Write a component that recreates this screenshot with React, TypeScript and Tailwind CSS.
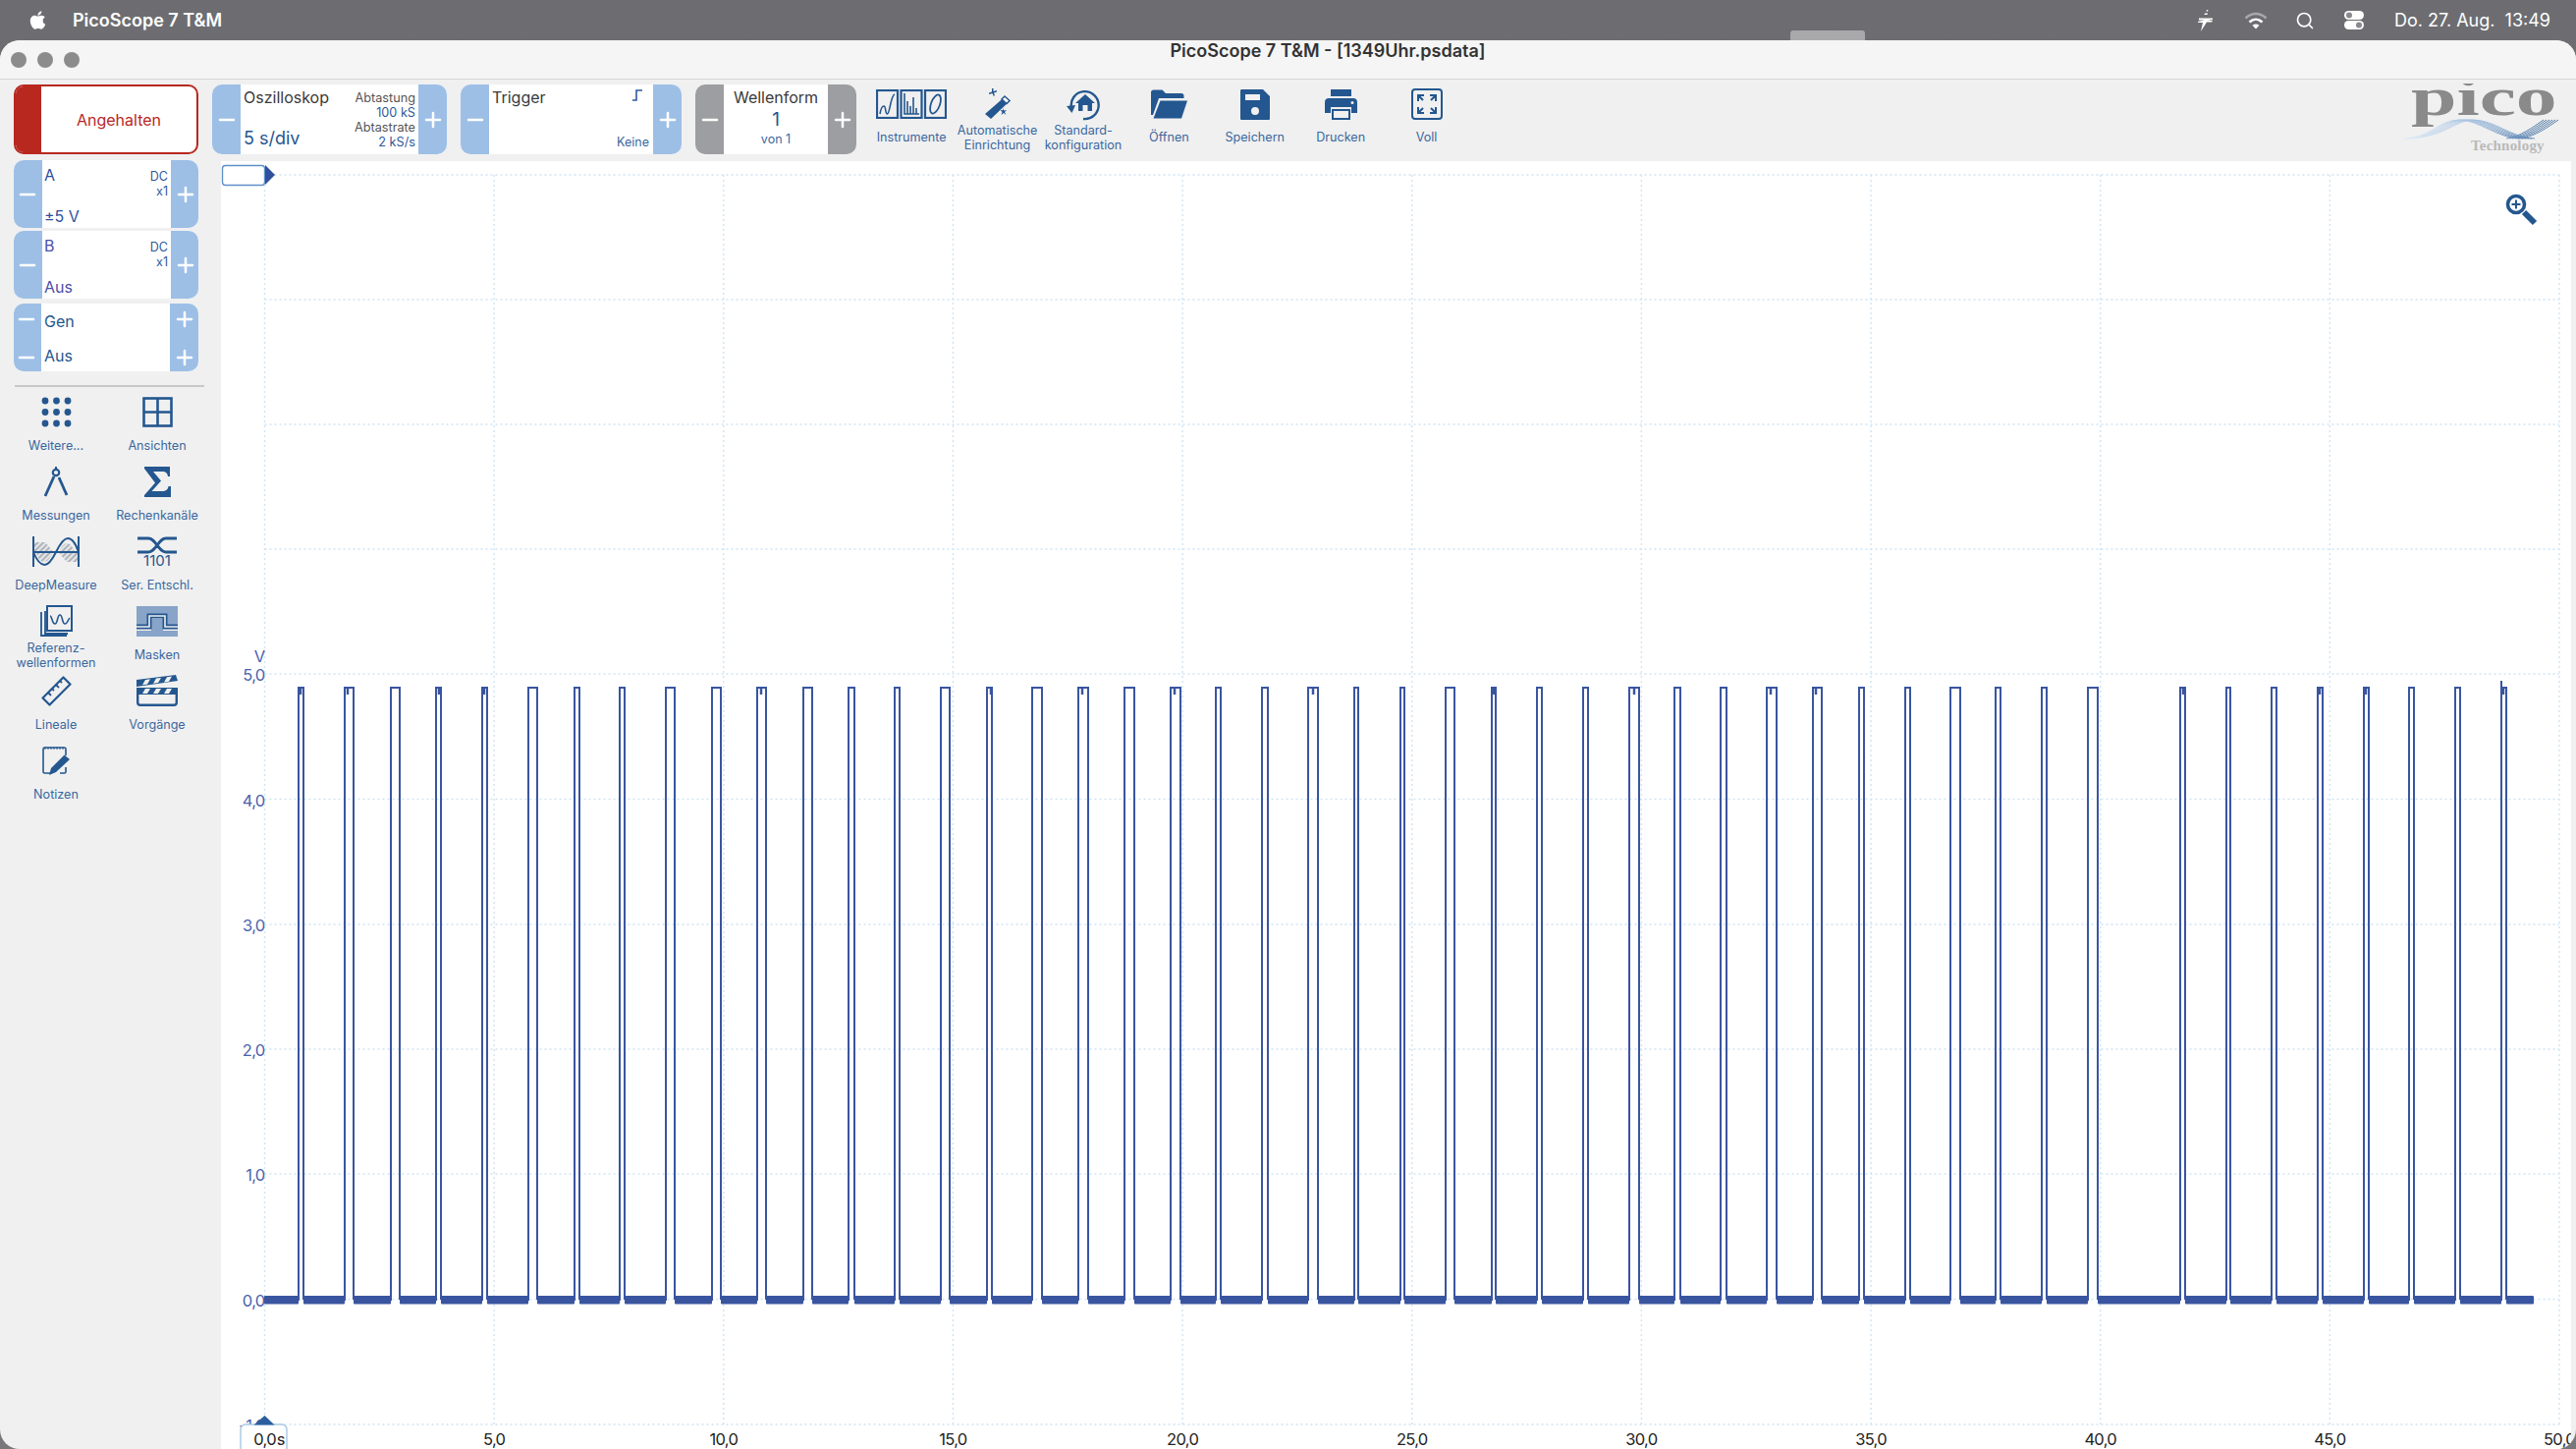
import type { ReactNode } from 'react'
import { FaApple } from 'react-icons/fa'
import { Minus, Plus, Search } from 'lucide-react'

const TRACE = '#3a55a0'
const GRID = '#cfe4f3'

// flat stretches of the trace between pulses, read off the capture
const LOWS: [number, number][] = [
  [269, 304], [309, 351], [360, 398], [407, 444], [449, 491], [496, 538], [547, 585], [590, 631],
  [636, 678], [687, 725], [734, 771], [780, 818], [827, 864], [870, 911], [916, 958], [967, 1005],
  [1010, 1051], [1061, 1098], [1108, 1145], [1155, 1192], [1202, 1238], [1243, 1285], [1291, 1332],
  [1342, 1379], [1383, 1426], [1430, 1472], [1481, 1519], [1523, 1565], [1570, 1612], [1617, 1659],
  [1669, 1705], [1711, 1752], [1758, 1799], [1809, 1846], [1855, 1893], [1898, 1940], [1945, 1986],
  [1996, 2032], [2037, 2079], [2084, 2126], [2136, 2220], [2225, 2267], [2271, 2313], [2318, 2360],
  [2365, 2407], [2412, 2453], [2458, 2500], [2505, 2547], [2552, 2580],
]
const NOTCHES = [306, 354, 447, 493, 775, 1009, 1102, 1196, 1337, 1521, 1664, 1803, 1849, 2223, 2362, 2409, 2549]

const tracePath = LOWS.map(([a, b], i) => {
  const next = LOWS[i + 1]
  return next ? `M${a} 1323H${b}V700H${next[0]}V1323` : `M${a} 1323H${b}`
}).join('')

const X_TICKS = ['0,0', '5,0', '10,0', '15,0', '20,0', '25,0', '30,0', '35,0', '40,0', '45,0', '50,0']
const Y_LINES = [178, 305, 432, 559, 686, 813.5, 941, 1068, 1195, 1322.5, 1450]
const Y_TICKS: [string, number][] = [['5,0', 686], ['4,0', 813.5], ['3,0', 941], ['2,0', 1068], ['1,0', 1195], ['0,0', 1322.5], ['-1,0', 1450]]

function tickX(i: number) {
  return 269.5 + 233.65 * i
}

function StepButton({ kind, className }: { kind: 'minus' | 'plus'; className: string }) {
  return (
    <div className={`flex items-center justify-center ${className}`}>
      {kind === 'minus' ? <Minus size={24} strokeWidth={2.5} color="#fff" /> : <Plus size={24} strokeWidth={2.5} color="#fff" />}
    </div>
  )
}

function Stepper({ width, gray, children }: { width: string; gray?: boolean; children: ReactNode }) {
  const bg = gray ? 'bg-[#9d9ea1]' : 'bg-[#9dbfe6]'
  return (
    <div className={`flex h-[71px] shrink-0 overflow-hidden rounded-[10px] bg-white ${width}`}>
      <StepButton kind="minus" className={`w-[29px] shrink-0 ${bg}`} />
      <div className="relative min-w-0 flex-1">{children}</div>
      <StepButton kind="plus" className={`w-[29px] shrink-0 ${bg}`} />
    </div>
  )
}

function ChannelPanel({ name, value, color }: { name: string; value: string; color: string }) {
  return (
    <div className="flex h-[69px] w-[188px] overflow-hidden rounded-[10px] bg-white">
      <StepButton kind="minus" className="w-[29px] shrink-0 bg-[#9dbfe6] pr-[2px]" />
      <div className={`flex flex-1 flex-col justify-between pb-[2px] pl-[2px] pr-[3px] pt-[5px] ${color}`}>
        <div className="flex justify-between">
          <span className="text-[16px] leading-[20px]">{name}</span>
          <span className="pt-[4px] text-right text-[12.5px] leading-[15px] text-[#2d5a9c]">
            DC
            <br />
            x1
          </span>
        </div>
        <span className="text-[16px] leading-[20px]">{value}</span>
      </div>
      <StepButton kind="plus" className="w-[28px] shrink-0 bg-[#9dbfe6] pl-[2px]" />
    </div>
  )
}

function GenPanel() {
  return (
    <div className="flex h-[69px] w-[188px] overflow-hidden rounded-[10px] bg-white">
      <div className="flex w-[28px] shrink-0 flex-col justify-between bg-[#9dbfe6] pb-[2px] pt-[4px]">
        <StepButton kind="minus" className="h-[24px] pr-[2px]" />
        <StepButton kind="minus" className="h-[24px] pr-[2px]" />
      </div>
      <div className="flex flex-1 flex-col justify-between pb-[6px] pl-[3px] pt-[8px] text-[16px] leading-[20px] text-[#24578f]">
        <span>Gen</span>
        <span>Aus</span>
      </div>
      <div className="flex w-[29px] shrink-0 flex-col justify-between bg-[#9dbfe6] pb-[2px] pt-[4px]">
        <StepButton kind="plus" className="h-[24px]" />
        <StepButton kind="plus" className="h-[24px]" />
      </div>
    </div>
  )
}

function ToolLabel({ children }: { children: ReactNode }) {
  return <div className="flex h-[31px] items-center justify-center text-center text-[12.6px] leading-[14.5px] text-[#3a689f]">{children}</div>
}

function SideTool({ icon, label }: { icon: ReactNode; label: ReactNode }) {
  return (
    <div className="flex h-[71px] flex-col pt-[6px]">
      <div className="flex h-[30px] items-center justify-center text-[#24578f]">{icon}</div>
      <div className="mt-[5px]">
        <ToolLabel>{label}</ToolLabel>
      </div>
    </div>
  )
}

function TopTool({ icon, label }: { icon: ReactNode; label: ReactNode }) {
  return (
    <div className="flex w-[87.4px] shrink-0 flex-col pt-[9px]">
      <div className="flex h-[32px] items-center justify-center text-[#24578f]">{icon}</div>
      <div className="mt-[3px]">
        <ToolLabel>{label}</ToolLabel>
      </div>
    </div>
  )
}

function DotsIcon() {
  const pos = [4, 15.5, 27]
  return (
    <svg width="31" height="31" viewBox="0 0 31 31" fill="currentColor">
      {pos.map((y) => pos.map((x) => <circle key={`${x}-${y}`} cx={x} cy={y} r="3.4" />))}
    </svg>
  )
}

function ViewsIcon() {
  return (
    <svg width="31" height="31" viewBox="0 0 31 31" fill="none" stroke="currentColor" strokeWidth="2.6">
      <rect x="1.5" y="1.5" width="28" height="28" />
      <path d="M15.5 1.5v28M1.5 15.5h28" />
    </svg>
  )
}

function CompassIcon() {
  return (
    <svg width="26" height="31" viewBox="0 0 26 31" fill="none" stroke="currentColor">
      <circle cx="13" cy="6" r="3.2" strokeWidth="2.2" />
      <path d="M13 0v2" strokeWidth="2" />
      <path d="M11 10 2 30" strokeWidth="2.8" />
      <path d="m16 11 8 18" strokeWidth="2.8" />
    </svg>
  )
}

function SigmaIcon() {
  return (
    <svg width="27" height="31" viewBox="0 0 27 31" fill="currentColor">
      <path d="M0 0h26v10h-2c-.5-3.500-2-5-6-5H9l8 9.500L7.500 25H18c4 0 6-1.500 6.500-5H27v11H0v-2l11-12.500L0 2z" />
    </svg>
  )
}

function DeepMeasureIcon() {
  return (
    <svg width="50" height="31" viewBox="0 0 50 31" fill="none">
      <defs>
        <pattern id="hatch" width="4" height="4" patternUnits="userSpaceOnUse" patternTransform="rotate(45)">
          <rect width="4" height="4" fill="#e6e6e6" />
          <rect width="2" height="4" fill="#aeb4bc" />
        </pattern>
      </defs>
      <path d="M3 6h11c3 3 6 7 8 10H3zM47 26H36c-3-3-6-7-8-10h19zM28 16l2-4c2-3 4-5 6-5 4 0 7 5 8 9zM22 16l-2 4c-2 3-4 6-7 6-4 0-7-5-8-10z" fill="url(#hatch)" />
      <path d="M2 0v31M48 0v31M2 16h46" stroke="currentColor" strokeWidth="2" />
      <path d="M2 16C6 26 10 29 13.500 29S21 24 25 16 33 2 37 2s8 5 11 14" stroke="currentColor" strokeWidth="2" />
    </svg>
  )
}

function SerialIcon() {
  return (
    <div className="flex flex-col items-center">
      <svg width="40" height="18" viewBox="0 0 40 18" fill="none" stroke="currentColor" strokeWidth="2.8">
        <path d="M0 2h11c4 0 6 3 9 7s5 7 9 7h11M0 16h11c4 0 6-3 9-7s5-7 9-7h11" />
      </svg>
      <span className="text-[15px] leading-[13px] text-[#24578f]">1101</span>
    </div>
  )
}

function ReferenceIcon() {
  return (
    <svg width="33" height="32" viewBox="0 0 33 32" fill="none" stroke="currentColor" strokeWidth="1.8">
      <path d="M1 7v24h26" />
      <rect x="7" y="1" width="25" height="25" strokeWidth="2" />
      <path d="M5 6v23h23" />
      <path d="M10 11c2 0 2 8 5 8s2-9 5-9 2 9 5 9 3-4 5-6" strokeWidth="1.6" />
    </svg>
  )
}

function MaskIcon() {
  return (
    <svg width="42" height="31" viewBox="0 0 42 31" fill="none">
      <path d="M0 0h42v19H30v-9H12v9H0zM0 25h15v-12h12v12h15v6H0z" fill="#88a4c8" />
      <path d="M0 21h13V10h16v11h13" stroke="currentColor" strokeWidth="5" />
      <path d="M0 21h13V10h16v11h13" stroke="#f0f0f0" strokeWidth="1.600" />
    </svg>
  )
}

function RulerIcon() {
  return (
    <svg width="31" height="31" viewBox="0 0 31 31" fill="none" stroke="currentColor" strokeWidth="2.2">
      <path d="M1.500 22.500 22.500 1.500l7 7-21 21z" strokeLinejoin="round" />
      <path d="m7 17 3 3M11 13l2 2M15 9l3 3M19 5l2 2" strokeWidth="1.8" />
    </svg>
  )
}

function ClapperIcon() {
  return (
    <svg width="42" height="32" viewBox="0 0 42 32" fill="currentColor">
      <path d="M0 5 40 0l2 6-42 6zM0 13h42v7H0z" />
      <path d="m9 5 5-.7-3 5.200-5 .7zM20 3.600l5-.7-3 5.200-5 .7zM31 2.200l5-.7-3 5.200-5 .7zM9 14h5l-3 5H6zM20 14h5l-3 5h-5zM31 14h5l-3 5h-5z" fill="#f0f0f0" />
      <path d="M1.200 19v9c0 1.800 1 2.800 2.800 2.800h34c1.800 0 2.800-1 2.800-2.800v-9" fill="none" stroke="currentColor" strokeWidth="2.400" />
    </svg>
  )
}

function NotesIcon() {
  return (
    <svg width="29" height="31" viewBox="0 0 29 31" fill="none" stroke="currentColor">
      <path d="M8 28H2.500C1.500 28 1 27.500 1 26.500V3.500C1 2.500 1.500 2 2.500 2h20c1 0 1.500.5 1.500 1.500V10M24 22v4.500c0 1-.5 1.500-1.500 1.500H18" strokeWidth="1.600" />
      <path d="M3 1v3M6 1v3M9 1v3M12 1v3M15 1v3M18 1v3M21 1v3" strokeWidth="1" />
      <path d="M22.500 9.500 28 14 14 27l-7 3 2-7z" fill="currentColor" stroke="none" />
    </svg>
  )
}

function InstrumentsIcon() {
  return (
    <svg width="72" height="30" viewBox="0 0 72 30" fill="none" stroke="currentColor">
      <rect x="1" y="1" width="21" height="28" strokeWidth="2.200" />
      <rect x="25.500" y="1" width="21" height="28" strokeWidth="2.200" />
      <rect x="50" y="1" width="21" height="28" strokeWidth="2.200" />
      <path d="M4 25c1-6 2-8 4-8 2.500 0 1 8 3.500 8C14 25 15 6 19 5" strokeWidth="1.600" />
      <path d="M29 4v21h15M32 25V12M35 25V17M38 25V8M41 25V19" strokeWidth="1.600" />
      <ellipse cx="60.500" cy="15" rx="4.500" ry="10" transform="rotate(20 60.500 15)" strokeWidth="1.800" />
    </svg>
  )
}

function WandIcon() {
  return (
    <svg width="29" height="32" viewBox="0 0 29 32" fill="currentColor">
      <path d="M22 8.500 27 13 8 31 2 26z" />
      <path d="m19 11 3-3 5 4.500-3 3z" fill="#fff" stroke="currentColor" strokeWidth="1.500" />
      <path d="M9 0h1.500v3L14 2v1.500l-3 1 1 3h-1.500L9.500 5 6 6V4.500l3-1zM20 20l1 2.500 3-.5-2 2 1.500 3-2.500-2-2.500 2 1-3-2-2 2.500.3z" />
    </svg>
  )
}

function DefaultConfigIcon() {
  return (
    <svg width="36" height="34" viewBox="0 0 36 34" fill="none">
      <path d="M6 21A14 14 0 1 1 18 32" stroke="currentColor" strokeWidth="2.400" />
      <path d="m1 19 9-1-3.500 8z" fill="currentColor" />
      <path d="M20 7 30 16h-3v8h-4.500v-6h-5v6H13v-8h-3z" fill="currentColor" />
    </svg>
  )
}

function FolderIcon() {
  return (
    <svg width="37" height="30" viewBox="0 0 37 30" fill="currentColor">
      <path d="M0 3c0-1.500 1-2.500 2.500-2.500h9L15 4h16c1.500 0 2.500 1 2.500 2.500V9H8L2 26H0z" />
      <path d="M9.500 11.500H37L31 29.500H2.500z" />
    </svg>
  )
}

function FloppyIcon() {
  return (
    <svg width="30" height="31" viewBox="0 0 30 31" fill="currentColor" fillRule="evenodd">
      <path d="M1.500 0H23l7 7v22.500c0 1-.5 1.500-1.500 1.500h-27C.5 31 0 30.500 0 29.500v-28C0 .5.5 0 1.500 0zM5 5v6h15V5zM15 18a4 4 0 1 0 0 8 4 4 0 0 0 0-8z" />
    </svg>
  )
}

function PrinterIcon() {
  return (
    <svg width="33" height="31" viewBox="0 0 33 31" fill="currentColor" fillRule="evenodd">
      <path d="M6 0h21v7H6zM4 9h25c2.500 0 4 1.500 4 4v11h-6v-6H6v6H0V13c0-2.500 1.500-4 4-4zM28 12a1.500 1.500 0 1 0 0 3 1.500 1.500 0 0 0 0-3z" />
      <path d="M7 20h19v11H7zm2 2v7h15v-7z" />
    </svg>
  )
}

function FullIcon() {
  return (
    <svg width="32" height="32" viewBox="0 0 32 32" fill="none" stroke="currentColor">
      <rect x="1" y="1" width="30" height="30" rx="3" strokeWidth="2" />
      <path d="M7 13V7h6M7 7l5 5M25 13V7h-6M25 7l-5 5M7 19v6h6M7 25l5-5M25 19v6h-6M25 25l-5-5" strokeWidth="2" />
    </svg>
  )
}

function PicoLogo() {
  const offsets = [0, 3, 6, 9, 12, 15]
  return (
    <svg width="170" height="78" viewBox="0 0 170 78">
      <defs>
        <linearGradient id="logoWave" x1="0" x2="1" y1="0" y2="0">
          <stop offset="0" stopColor="#e2eef8" />
          <stop offset="0.5" stopColor="#9dbbdd" />
          <stop offset="1" stopColor="#3f6c9c" />
        </linearGradient>
      </defs>
      <g transform="translate(15 32) scale(1.52 1)" fill="#8a8a8a" fontFamily="'Liberation Serif', serif" fontWeight="700" fontSize="55">
        <text x="0" y="0">pico</text>
      </g>
      {offsets.map((d) => (
        <path
          key={d}
          d={`M8 56C${34 + d} 56 ${44 + d} 37 ${64 + d} 37S${104 + d} 56 ${126 + d} 56M${112 + d} 56C${126 + d} 54 ${140 + d} 44 ${150 + d} 37`}
          fill="none"
          stroke="url(#logoWave)"
          strokeWidth="0.9"
        />
      ))}
      <text x="76" y="68" fill="#b9b9b9" fontFamily="'Liberation Serif', serif" fontWeight="700" fontSize="15" letterSpacing="0.2">
        Technology
      </text>
    </svg>
  )
}

function PlotSvg() {
  return (
    <svg className="block h-[1311px] w-[2393px]" viewBox="225 164 2393 1311" fontSize="16.5" letterSpacing="-0.7">
      <rect x="225" y="164" width="2393" height="1311" fill="#fff" />
      <g stroke={GRID} strokeWidth="1.4" strokeDasharray="2 3" fill="none">
        {Y_LINES.map((y) => (
          <path key={y} d={`M269.500 ${y}H2606`} />
        ))}
        {X_TICKS.map((_, i) => (
          <path key={i} d={`M${tickX(i)} 178V1450`} />
        ))}
      </g>

      {/* trigger flag, top left */}
      <rect x="226.500" y="168.500" width="43" height="20" rx="3" fill="#fff" stroke="#5f8fca" strokeWidth="1.400" />
      <path d="M270 168l10 10-10 10z" fill="#2f4f9f" />

      <g fill="#4a63ad" textAnchor="end">
        <text x="269.500" y="674">V</text>
        {Y_TICKS.map(([t, y]) => (
          <text key={t} x="269.500" y={y + 7}>
            {t}
          </text>
        ))}
      </g>

      <path d={tracePath} fill="none" stroke={TRACE} strokeWidth="2" />
      {LOWS.map(([a, b]) => (
        <rect key={a} x={a} y="1319" width={b - a} height="8.500" rx="1" fill={TRACE} />
      ))}
      {NOTCHES.map((x) => (
        <path key={x} d={`M${x} 700v7`} stroke={TRACE} strokeWidth="2.500" />
      ))}
      <path d="M2547 693v14" stroke={TRACE} strokeWidth="2" />

      {/* time cursor */}
      <rect x="245" y="1450" width="47" height="30" rx="5" fill="#fff" stroke="#a9c7e4" strokeWidth="1.400" />
      <path d="M269.500 1441l10 9.500h-21z" fill="#2a5f9e" />
      <g fill="#222" textAnchor="middle">
        <text x="274" y="1471" wordSpacing="-3">
          0,0 s
        </text>
        {X_TICKS.slice(1).map((t, i) => (
          <text key={t} x={tickX(i + 1)} y="1471">
            {t}
          </text>
        ))}
      </g>

      {/* zoom glass */}
      <g fill="none" stroke="#24578f">
        <circle cx="2562" cy="208" r="8.500" strokeWidth="3.600" />
        <path d="M2570 216l11 11" strokeWidth="6" />
        <path d="M2557.500 208h9M2562 203.500v9" strokeWidth="2" />
      </g>
    </svg>
  )
}

export default function App() {
  return (
    <div className="flex h-screen w-screen flex-col overflow-hidden bg-gradient-to-b from-[#6d6d71] to-[#78787c] font-[Inter,sans-serif]">
      {/* macOS menu bar */}
      <header className="relative flex h-[41px] shrink-0 items-center text-white">
        <FaApple className="ml-[28px] text-[21px] text-white" />
        <span className="ml-[25px] text-[18px] font-semibold">PicoScope 7 T&amp;M</span>
        <div className="ml-auto flex items-center pr-[26px]">
          <svg width="16" height="22" viewBox="0 0 16 22" fill="#fff">
            <path d="M9 0h1.500L10 1.500H8.500zM7 3.500h3L9.500 5h-3zM1 8.500h14V10L10 11h5l-1 1.500H9L3 22l2-9H0v-1l7-1.500H1z" />
          </svg>
          <svg className="ml-[31px]" width="24" height="18" viewBox="0 0 24 18" fill="none">
            <path d="M1.500 6.500C8 .5 16 .5 22.500 6.500" stroke="#a9a9ac" strokeWidth="2.600" />
            <path d="M5.500 10.500C9.500 6.800 14.500 6.800 18.500 10.500" stroke="#fff" strokeWidth="2.600" />
            <path d="M12 17.500 8.500 13.800c2-1.700 5-1.700 7 0z" fill="#fff" />
          </svg>
          <Search className="ml-[28px]" size={20} strokeWidth={2} color="#fff" />
          <svg className="ml-[30px]" width="20" height="19" viewBox="0 0 20 19">
            <rect x="0" y="0" width="20" height="9" rx="4.500" fill="#fff" />
            <circle cx="5" cy="4.500" r="3" fill="#8a8a8d" />
            <rect x="0" y="10" width="20" height="9" rx="4.500" fill="#fff" />
            <circle cx="15" cy="14.500" r="3" fill="#8a8a8d" />
          </svg>
          <span className="ml-[31px] whitespace-pre text-[18px]">Do. 27. Aug.  13:49</span>
        </div>
        {/* window thumbnail peeking out of the bar */}
        <div className="absolute bottom-0 left-[1823px] h-[10px] w-[76px] rounded-t-[3px] bg-[#a9a9ab]" />
      </header>

      {/* app window */}
      <div className="flex min-h-0 flex-1 flex-col overflow-hidden rounded-[20px] bg-[#f0f0f0] text-[#3a3a3a]">
        <div className="flex h-[39px] shrink-0 bg-[#f5f5f5]">
          <div className="flex items-center gap-[11px] pl-[11px]">
            <span className="h-[16px] w-[16px] rounded-full bg-[#8c8c8c]" />
            <span className="h-[16px] w-[16px] rounded-full bg-[#8c8c8c]" />
            <span className="h-[16px] w-[16px] rounded-full bg-[#8c8c8c]" />
          </div>
          <div className="flex-1 text-center text-[18px] font-semibold leading-[22px] text-[#333]">PicoScope 7 T&amp;M - [1349Uhr.psdata]</div>
        </div>
        <div className="h-[1px] shrink-0 bg-[#d6d6d6]" />

        <div className="flex min-h-0 flex-1">
          {/* left column */}
          <aside className="w-[216px] shrink-0 pt-[5px]">
            <div className="ml-[14px] flex h-[71px] w-[188px] overflow-hidden rounded-[10px] border-2 border-[#b8281f] bg-white">
              <div className="w-[26px] bg-[#b8281f]" />
              <div className="flex flex-1 items-center justify-center text-[16px] text-[#b8281f]">Angehalten</div>
            </div>
            <div className="ml-[14px] mt-[6px]">
              <ChannelPanel name="A" value="±5 V" color="text-[#2f4f9f]" />
            </div>
            <div className="ml-[14px] mt-[3px]">
              <ChannelPanel name="B" value="Aus" color="text-[#4a4fa8]" />
            </div>
            <div className="ml-[14px] mt-[5px]">
              <GenPanel />
            </div>
            <div className="ml-[15px] mt-[14px] h-[1.5px] w-[193px] bg-[#c8c8c8]" />
            <div className="ml-[5.500px] mt-[4.500px] grid w-[206px] grid-cols-2">
              <SideTool icon={<DotsIcon />} label="Weitere..." />
              <SideTool icon={<ViewsIcon />} label="Ansichten" />
              <SideTool icon={<CompassIcon />} label="Messungen" />
              <SideTool icon={<SigmaIcon />} label="Rechenkanäle" />
              <SideTool icon={<DeepMeasureIcon />} label="DeepMeasure" />
              <SideTool icon={<SerialIcon />} label="Ser. Entschl." />
              <SideTool
                icon={<ReferenceIcon />}
                label={
                  <>
                    Referenz-
                    <br />
                    wellenformen
                  </>
                }
              />
              <SideTool icon={<MaskIcon />} label="Masken" />
              <SideTool icon={<RulerIcon />} label="Lineale" />
              <SideTool icon={<ClapperIcon />} label="Vorgänge" />
              <SideTool icon={<NotesIcon />} label="Notizen" />
            </div>
          </aside>

          {/* toolbar and plot */}
          <div className="flex min-w-0 flex-1 flex-col">
            <div className="flex h-[83px] shrink-0 items-start pt-[5px]">
              <div className="flex gap-[14px]">
                <Stepper width="w-[239px]">
                  <div className="flex h-full justify-between pl-[3px] pr-[3px]">
                    <div className="flex flex-col justify-between pb-[5px] pt-[3px]">
                      <span className="text-[16px] leading-[20px]">Oszilloskop</span>
                      <span className="text-[18px] leading-[22px] text-[#24578f]">5 s/div</span>
                    </div>
                    <div className="pt-[5.500px] text-right text-[12.7px] leading-[15px]">
                      <div className="text-[#555]">Abtastung</div>
                      <div className="text-[#2d5a9c]">100 kS</div>
                      <div className="text-[#555]">Abtastrate</div>
                      <div className="text-[#2d5a9c]">2 kS/s</div>
                    </div>
                  </div>
                </Stepper>
                <Stepper width="w-[225px]">
                  <div className="flex h-full justify-between pl-[3px] pr-[4px]">
                    <span className="pt-[3px] text-[16px] leading-[20px]">Trigger</span>
                    <div className="flex flex-col items-end justify-between pb-[4px] pt-[5px]">
                      <svg className="mr-[6px]" width="11" height="12" viewBox="0 0 11 12" fill="none" stroke="#2d5a9c" strokeWidth="1.600">
                        <path d="M0 11h4V1h6" />
                      </svg>
                      <span className="text-[12.500px] leading-[16px] text-[#3a689f]">Keine</span>
                    </div>
                  </div>
                </Stepper>
                <Stepper width="w-[164px]" gray>
                  <div className="flex h-full flex-col items-center pt-[3px]">
                    <span className="text-[16px] leading-[20px]">Wellenform</span>
                    <span className="text-[19px] leading-[25px] text-[#24578f]">1</span>
                    <span className="text-[12.500px] leading-[16px] text-[#3a689f]">von 1</span>
                  </div>
                </Stepper>
              </div>
              <div className="ml-[12.500px] flex -translate-y-[5px]">
                <TopTool icon={<InstrumentsIcon />} label="Instrumente" />
                <TopTool
                  icon={<WandIcon />}
                  label={
                    <>
                      Automatische
                      <br />
                      Einrichtung
                    </>
                  }
                />
                <TopTool
                  icon={<DefaultConfigIcon />}
                  label={
                    <>
                      Standard-
                      <br />
                      konfiguration
                    </>
                  }
                />
                <TopTool icon={<FolderIcon />} label="Öffnen" />
                <TopTool icon={<FloppyIcon />} label="Speichern" />
                <TopTool icon={<PrinterIcon />} label="Drucken" />
                <TopTool icon={<FullIcon />} label="Voll" />
              </div>
              <div className="ml-auto mr-[13px] -translate-y-[1px]">
                <PicoLogo />
              </div>
            </div>
            <div className="ml-[9px] min-h-0 flex-1 overflow-hidden">
              <PlotSvg />
            </div>
          </div>
        </div>
      </div>
    </div>
  )
}
